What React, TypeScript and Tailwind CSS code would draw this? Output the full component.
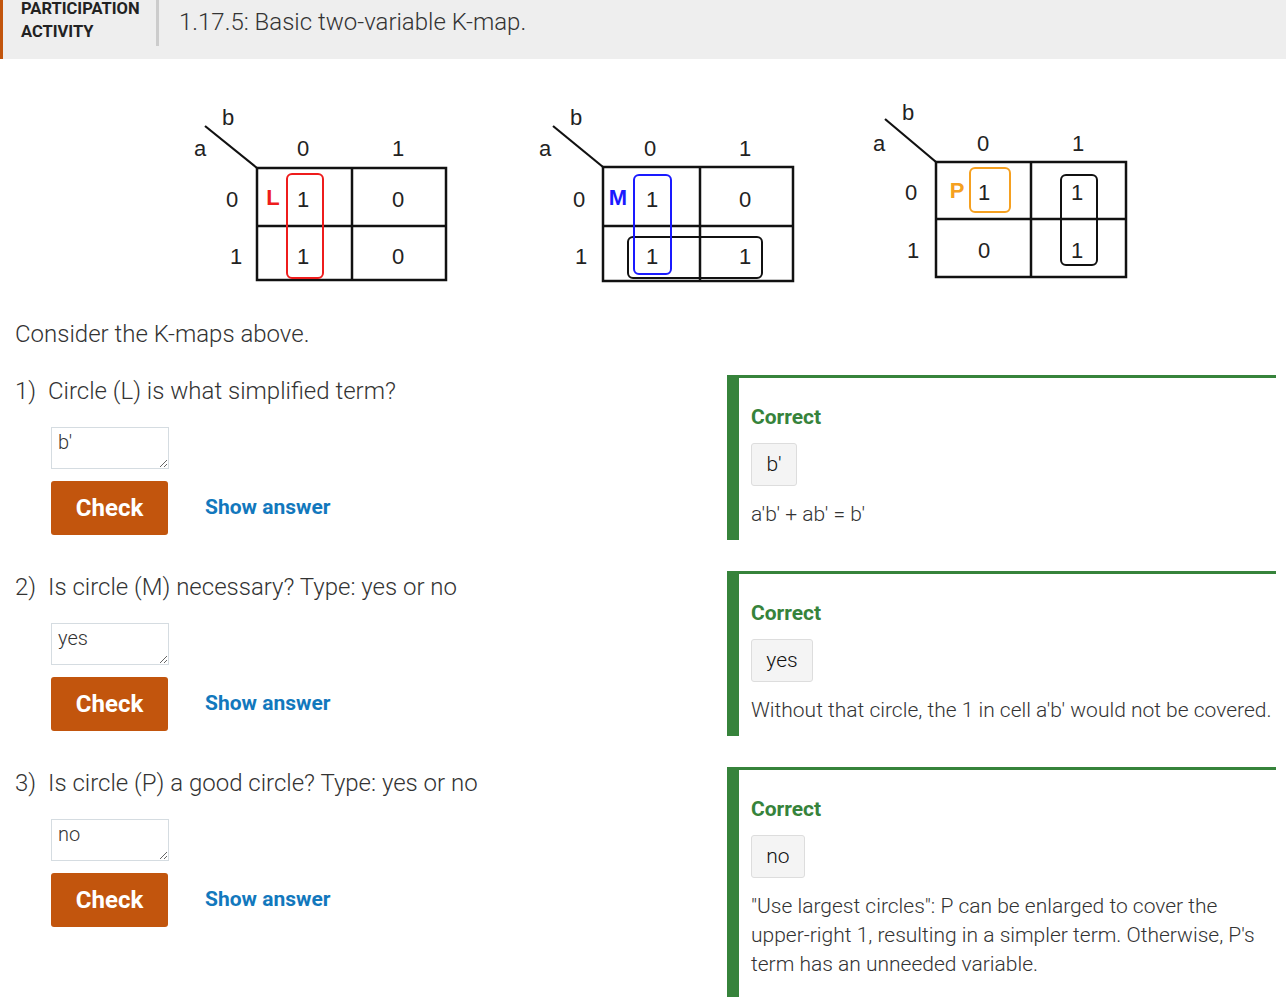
import React from 'react';

type Circle = { x1: number; y1: number; x2: number; y2: number; color: string };

type KMapProps = {
  diag: [number, number, number, number];
  b: [number, number];
  a: [number, number];
  xs: [number, number, number];
  ys: [number, number, number];
  colX: [number, number];
  colY: number;
  rowX: [number, number];
  rowY: [number, number];
  cellX: [number, number];
  cells: number[][];
  circles: Circle[];
  tag: { text: string; x: number; y: number; color: string };
  className?: string;
};

function KMap(p: KMapProps) {
  const font = { fontFamily: '"Liberation Sans", Arial, sans-serif', fontSize: 22 };
  return (
    <svg width="280" height="200" viewBox="0 0 280 200" className={p.className}>
      <line x1={p.diag[0]} y1={p.diag[1]} x2={p.diag[2]} y2={p.diag[3]} stroke="#111" strokeWidth="2.2" />
      <text x={p.b[0]} y={p.b[1]} textAnchor="middle" dominantBaseline="central" fill="#222" style={font}>b</text>
      <text x={p.a[0]} y={p.a[1]} textAnchor="middle" dominantBaseline="central" fill="#222" style={font}>a</text>
      <text x={p.colX[0]} y={p.colY} textAnchor="middle" dominantBaseline="central" fill="#222" style={font}>0</text>
      <text x={p.colX[1]} y={p.colY} textAnchor="middle" dominantBaseline="central" fill="#222" style={font}>1</text>
      <text x={p.rowX[0]} y={p.rowY[0]} textAnchor="middle" dominantBaseline="central" fill="#222" style={font}>0</text>
      <text x={p.rowX[1]} y={p.rowY[1]} textAnchor="middle" dominantBaseline="central" fill="#222" style={font}>1</text>
      {/* grid */}
      <rect x={p.xs[0]} y={p.ys[0]} width={p.xs[2] - p.xs[0]} height={p.ys[2] - p.ys[0]} fill="none" stroke="#111" strokeWidth="2.5" />
      <line x1={p.xs[1]} y1={p.ys[0]} x2={p.xs[1]} y2={p.ys[2]} stroke="#111" strokeWidth="2.5" />
      <line x1={p.xs[0]} y1={p.ys[1]} x2={p.xs[2]} y2={p.ys[1]} stroke="#111" strokeWidth="2.5" />
      {p.cells.map((row, r) =>
        row.map((v, c) => (
          <text
            key={`${r}-${c}`}
            x={p.cellX[c]}
            y={p.rowY[r]}
            textAnchor="middle"
            dominantBaseline="central"
            fill="#222"
            style={font}
          >
            {v}
          </text>
        ))
      )}
      {p.circles.map((c, i) => (
        <rect
          key={i}
          x={c.x1}
          y={c.y1}
          width={c.x2 - c.x1}
          height={c.y2 - c.y1}
          rx="5"
          fill="none"
          stroke={c.color}
          strokeWidth="2"
        />
      ))}
      <text
        x={p.tag.x}
        y={p.tag.y}
        textAnchor="middle"
        dominantBaseline="central"
        fill={p.tag.color}
        style={{ ...font, fontWeight: 700 }}
      >
        {p.tag.text}
      </text>
    </svg>
  );
}

type Question = {
  num: string;
  text: string;
  value: string;
  answer: string;
  explain: React.ReactNode;
  chipW: string;
};

const questions: Question[] = [
  {
    num: '1)',
    text: 'Circle (L) is what simplified term?',
    value: "b'",
    answer: "b'",
    explain: "a'b' + ab' = b'",
    chipW: 'w-[46px]',
  },
  {
    num: '2)',
    text: 'Is circle (M) necessary? Type: yes or no',
    value: 'yes',
    answer: 'yes',
    explain: "Without that circle, the 1 in cell a'b' would not be covered.",
    chipW: 'w-[62px]',
  },
  {
    num: '3)',
    text: 'Is circle (P) a good circle? Type: yes or no',
    value: 'no',
    answer: 'no',
    explain: (
      <>
        "Use largest circles": P can be enlarged to cover the
        <br />
        upper-right 1, resulting in a simpler term. Otherwise, P's
        <br />
        term has an unneeded variable.
      </>
    ),
    chipW: 'w-[54px]',
  },
];

function QuestionRow({ q, last }: { q: Question; last: boolean }) {
  return (
    <div className={`flex items-start ${last ? '' : 'mb-[31px]'}`}>
      {/* question + input */}
      <div className="w-[727px] pl-[15px]">
        <div className="flex text-[24px] leading-[32px] text-[#333333]">
          <span className="w-[33px]">{q.num}</span>
          <span>{q.text}</span>
        </div>
        <div className="pl-[36px]">
          <textarea
            readOnly
            defaultValue={q.value}
            className="mt-[20px] block w-[118px] h-[42px] border border-[#d5dce1] bg-white px-[6px] py-[1px] text-[20px] leading-[26px] font-light text-[#333333] outline-none"
          />
          <div className="mt-[12px] flex items-center">
            <button className="w-[117px] h-[54px] rounded-[3px] bg-[#c2550d] text-white text-[24px] font-bold">
              Check
            </button>
            <span className="ml-[37px] text-[21px] font-bold text-[#1278bd]">Show answer</span>
          </div>
        </div>
      </div>

      {/* feedback */}
      <div
        className={`w-[549px] border-t-[3px] border-l-[12px] border-[#36833b] pl-[12px] pt-[27px] ${
          last ? 'pb-[18px]' : 'pb-[11px]'
        }`}
      >
        <div className="text-[21px] leading-[24px] font-bold text-[#36833b]">Correct</div>
        <div
          className={`mt-[14px] ${q.chipW} h-[43px] flex items-center justify-center rounded-[3px] border border-[#dddddd] bg-[#f4f4f4] text-[21px] text-[#111111]`}
        >
          {q.answer}
        </div>
        <div className="mt-[14px] text-[21px] leading-[29px] font-light text-[#333333] whitespace-nowrap">
          {q.explain}
        </div>
      </div>
    </div>
  );
}

export default function App() {
  return (
    <div className="w-[1286px] min-h-[1005px] bg-white font-['Roboto',sans-serif] font-light overflow-hidden">
      {/* Header */}
      <div className="flex h-[59px] bg-[#eeeeee] border-l-[3px] border-[#c2550d]">
        <div className="w-[153px] pl-[18px] -mt-[3px] text-[16.5px] leading-[23px] font-bold text-[#222222]">
          PARTICIPATION
          <br />
          ACTIVITY
        </div>
        <div className="w-[3px] h-[46px] bg-[#cccccc]" />
        <div className="pl-[20px] pt-[6px] text-[24px] leading-[32px] font-light text-[#333333]">
          1.17.5: Basic two-variable K-map.
        </div>
      </div>

      {/* K-maps */}
      <div className="mt-[31px] flex items-start">
        <KMap
          className="ml-[180px] mt-[5px]"
          diag={[25, 31, 77, 73]}
          b={[48, 22]}
          a={[20, 53]}
          xs={[77, 172, 266]}
          ys={[73, 131, 185]}
          colX={[123, 218]}
          colY={53}
          rowX={[52, 56]}
          rowY={[104, 161]}
          cellX={[123, 218]}
          cells={[
            [1, 0],
            [1, 0],
          ]}
          circles={[{ x1: 107, y1: 79, x2: 143, y2: 183, color: '#ee1c1c' }]}
          tag={{ text: 'L', x: 93, y: 102, color: '#ee1c1c' }}
        />
        <KMap
          className="ml-[70px] mt-[5px]"
          diag={[23, 31, 73, 72]}
          b={[46, 22]}
          a={[15, 53]}
          xs={[73, 170, 263]}
          ys={[72, 131, 186]}
          colX={[120, 215]}
          colY={53}
          rowX={[49, 51]}
          rowY={[104, 161]}
          cellX={[122, 215]}
          cells={[
            [1, 0],
            [1, 1],
          ]}
          circles={[
            { x1: 98, y1: 142, x2: 232, y2: 183, color: '#111111' },
            { x1: 104, y1: 80, x2: 141, y2: 179, color: '#1a1aff' },
          ]}
          tag={{ text: 'M', x: 88, y: 102, color: '#1a1aff' }}
        />
        <KMap
          className="ml-[50px]"
          diag={[25, 29, 76, 72]}
          b={[48, 22]}
          a={[19, 53]}
          xs={[76, 171, 266]}
          ys={[72, 129, 187]}
          colX={[123, 218]}
          colY={53}
          rowX={[51, 53]}
          rowY={[102, 160]}
          cellX={[124, 217]}
          cells={[
            [1, 1],
            [0, 1],
          ]}
          circles={[
            { x1: 110, y1: 78, x2: 150, y2: 122, color: '#f5a020' },
            { x1: 201, y1: 85, x2: 237, y2: 175, color: '#111111' },
          ]}
          tag={{ text: 'P', x: 97, y: 100, color: '#f5a020' }}
        />
      </div>

      <p className="mt-[23px] pl-[15px] text-[24px] leading-[32px] text-[#333333]">Consider the K-maps above.</p>

      <div className="mt-[25px]">
        {questions.map((q, i) => (
          <QuestionRow key={q.num} q={q} last={i === questions.length - 1} />
        ))}
      </div>
    </div>
  );
}
